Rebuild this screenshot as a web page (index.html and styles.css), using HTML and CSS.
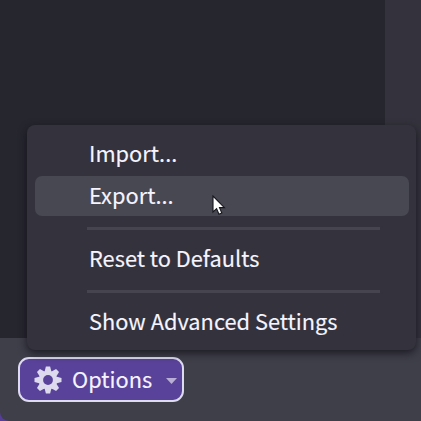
FILE: index.html
```html
<!DOCTYPE html>
<html lang="en">
<head>
<meta charset="utf-8">
<title>Options</title>
<link rel="stylesheet" href="styles.css">
</head>
<body>
<div class="window">
  <main class="content"><div class="list"></div></main>
  <footer class="footer">
    <button class="options">
      <svg class="gear" viewBox="-14 -14 28 28">
        <g fill="#dddaee">
          <g id="teeth">
            <path id="tooth" d="M-3.5-8L-2.1-13.5H2.1L3.5-8V8L2.1 13.5H-2.1L-3.5 8Z"/>
            <use href="#tooth" transform="rotate(90)"/>
          </g>
          <use href="#teeth" transform="rotate(45)"/>
          <circle r="9.2"/>
        </g>
        <circle r="4.9" fill="#594299"/>
      </svg>
      <span class="options-label">Options</span>
      <svg class="caret" viewBox="0 0 11 6"><path d="M0 0H11L5.5 6Z" fill="#b9aed6"/></svg>
    </button>
  </footer>
</div>
<div class="menu">
  <div class="item">Import...</div>
  <div class="item active">Export...</div>
  <div class="separator"></div>
  <div class="item">Reset to Defaults</div>
  <div class="separator"></div>
  <div class="item">Show Advanced Settings</div>
</div>
<svg class="cursor" viewBox="0 0 14 21"><path d="M1 1V17L4.6 13.7L7 19.2L9.8 18L7.5 12.6H12.4Z" fill="#fff" stroke="#15151d" stroke-width="1.1"/></svg>
</body>
</html>
```

FILE: styles.css
```css
* { box-sizing: border-box; }
body {
  margin: 0;
  background: #563e97;
  color: #f5f4ff;
  font: 21.8px/38px "Noto Sans CJK SC", "Noto Sans", sans-serif;
  -webkit-text-stroke: 0.12px currentColor;
  overflow: hidden;
}
.window {
  display: flex;
  flex-direction: column;
  width: 421px;
  height: 421px;
  border-bottom-left-radius: 9px;
  overflow: hidden;
}
.content {
  flex: 1;
  display: flex;
  background: #34333d;
}
.list {
  width: 385px;
  background: #26262f;
}
.footer {
  height: 83px;
  padding: 19px 18px;
  background: #3f3f4a;
}
.options {
  display: flex;
  align-items: center;
  width: 166px;
  height: 45px;
  padding: 0 5px 0 14px;
  border: 2px solid #dedaf0;
  border-radius: 11px;
  background: #594299;
  color: inherit;
  font: inherit;
}
.gear { width: 28px; height: 28px; }
.options-label { margin: 0 0 2px 10px; white-space: nowrap; }
.caret { width: 11px; height: 6px; margin: 3px 0 0 auto; }
.menu {
  position: absolute;
  left: 27px;
  top: 125px;
  width: 389px;
  height: 225px;
  padding: 9px 7px 8px 8px;
  border-radius: 8px;
  background: #34333d;
  box-shadow: 0 3px 8px rgba(15, 14, 22, 0.75);
}
.item {
  height: 40px;
  padding-left: 54px;
  border-radius: 7px;
  white-space: nowrap;
}
.active { margin-top: 2px; background: #484852; }
.separator {
  height: 3px;
  margin: 11px 29px 9px 52px;
  background: #45444f;
}
.cursor {
  position: absolute;
  left: 212px;
  top: 195px;
  width: 14px;
  height: 21px;
}
```
